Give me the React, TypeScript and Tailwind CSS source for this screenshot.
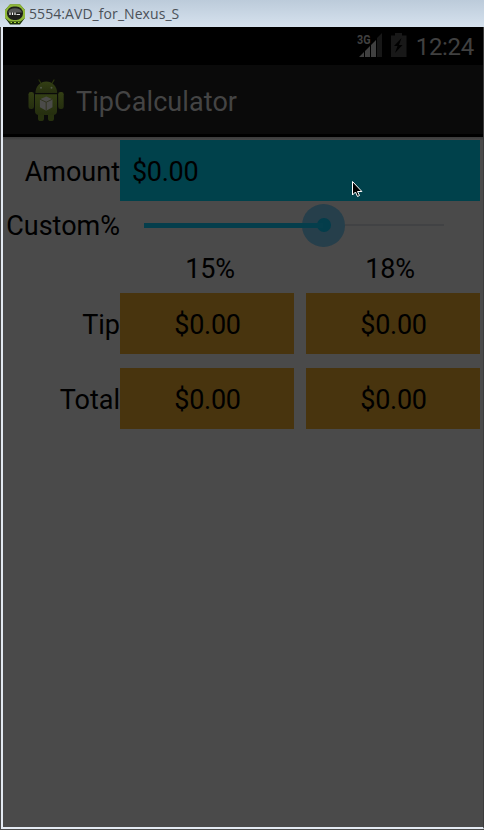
function EmulatorIcon() {
  return (
    <svg width="22" height="22" viewBox="0 0 22 22" className="shrink-0">
      <path d="M1.500 6.500L6 1.500h10l4.500 5v9L16 21.500H6l-4.500-6z" fill="#1c3308" />
      <path d="M1 7L6 1.300h10L21 7v8l-4.500 3.500h-11L1 15z" fill="#8fb83a" />
      <rect x="3" y="3.500" width="16" height="13.500" rx="6.700" fill="#1d1f1a" />
      <path d="M4 9.500a7.200 5.500 0 0 1 14 0z" fill="#565856" />
      <path d="M6 9.500v2.500M8.500 9.500v2.500M11 9.500v2.500" stroke="#fff" strokeWidth="1.200" />
      <path d="M12.500 11.500h3.500" stroke="#ddd" strokeWidth="1" />
      <path d="M6.500 19.500H8M10 19.500h2M14 19.500h1.500" stroke="#a6d63a" strokeWidth="1" />
    </svg>
  );
}

function Robot() {
  return (
    <svg width="36" height="43" viewBox="0 0 36 43" className="shrink-0">
      <defs>
        <linearGradient id="g" x1="0" y1="0" x2="0" y2="1">
          <stop offset="0" stopColor="#333f14" />
          <stop offset="1" stopColor="#252e0f" />
        </linearGradient>
      </defs>
      <path d="M11 1l3 5M26 1l-3 5" stroke="#2b360e" strokeWidth="1.200" strokeLinecap="round" />
      <path d="M7.500 14a10.800 11.500 0 0 1 21.600 0z" fill="url(#g)" />
      <circle cx="13" cy="8.700" r="1" fill="#505748" />
      <circle cx="23.500" cy="8.700" r="1" fill="#505748" />
      <rect x="0.500" y="13" width="5.500" height="17" rx="2.300" fill="url(#g)" />
      <rect x="30.200" y="13" width="5.500" height="17" rx="2.300" fill="url(#g)" />
      <rect x="10" y="32" width="6" height="10" rx="2.600" fill="#27310f" />
      <rect x="20" y="32" width="6" height="10" rx="2.600" fill="#27310f" />
      <path d="M7 15.300h22V32a4 4 0 0 1-4 4H11a4 4 0 0 1-4-4z" fill="url(#g)" />
      <path d="M18.200 17.500l6.300 2.700v8l-6.300 3.500-6.300-3.500v-8z" fill="#4b4b49" />
      <path d="M11.900 20.200l6.300 3 6.300-3M18.200 23.200v8.500" stroke="#30331f" strokeWidth="1" fill="none" />
    </svg>
  );
}

function Signal() {
  return (
    <svg width="26" height="26" viewBox="0 0 26 26" className="shrink-0">
      <text x="0" y="11" fontFamily="Roboto" fontWeight="700" fontSize="13" textLength="13.500" lengthAdjust="spacingAndGlyphs" fill="#404040">3G</text>
      <path d="M20 5l5-5v24h-5z" fill="#171717" />
      <path d="M2 24l5-5v5zM8 18l5-5v11H8zM14 12l5-5v17h-5z" fill="#404040" />
    </svg>
  );
}

function Battery() {
  return (
    <svg width="16" height="24" viewBox="0 0 16 24" className="shrink-0">
      <path d="M4 0h7v2.500h4.500V24H0V2.500h4z" fill="#181818" />
      <path d="M10.500 5L3 13h3.500L4 20l7.500-8H8z" fill="#000" />
    </svg>
  );
}

const label = "w-[117px] shrink-0 text-right whitespace-nowrap";

function ResultRow({ name }: { name: string }) {
  return (
    <div className="flex h-[61px] items-center pr-[3px]">
      <div className={label}><span className="relative top-px">{name}</span></div>
      <div className="flex h-full flex-1 gap-3 text-center leading-[65px] tracking-[-0.3px]">
        <div className="flex-1 bg-[#48340e] pl-px">$0.00</div>
        <div className="flex-1 bg-[#48340e] pl-px">$0.00</div>
      </div>
    </div>
  );
}

export default function App() {
  return (
    <div className="relative flex h-[830px] w-[484px] flex-col overflow-hidden bg-[#4a4a4a] font-['Roboto',sans-serif]">
      <header className="flex h-[27px] items-center bg-linear-to-b from-[#bccbda] to-[#d6e2ee] pl-1 text-[#4b5158]">
        <EmulatorIcon />
        <span className="ml-[3px] font-['Open_Sans',sans-serif] text-[14px] tracking-[0.070px]">5554:AVD_for_Nexus_S</span>
      </header>
      <div className="flex flex-1 flex-col border-b-2 border-l-2 border-r border-b-[#e4eaf3] border-l-[#e4eaf3] border-r-[#3c3c3c] ml-px mb-px">
        <div className="flex h-[38px] items-start justify-end bg-black pr-[9px] text-[#404040]">
          <div className="mt-[6px]"><Signal /></div>
          <div className="ml-[8px] mt-[6px]"><Battery /></div>
          <span className="ml-[9px] mt-[3px] text-[24px] leading-[34px] tracking-[-0.300px]">12:24</span>
        </div>
        <div className="flex h-[72px] items-start border-b-[3px] border-b-black bg-[#0a0a0a] pl-[25px]">
          <div className="mt-[14px]"><Robot /></div>
          <span className="ml-3 mt-[20px] text-[27px] leading-[34px] tracking-[0.080px] text-[#444]">TipCalculator</span>
        </div>
        <main className="flex-1 bg-[#4a4a4a] text-[27px] leading-8 text-black">
          <div className="h-[3px] bg-linear-to-b from-[#3b3b3b] to-[#484848]" />
          <div className="flex h-[61px] items-center pr-[3px]">
            <div className={label}><span className="relative top-px">Amount</span></div>
            <div className="h-full flex-1 bg-[#00414b] pl-3 leading-[65px] tracking-[-0.3px]">$0.00</div>
          </div>
          <div className="flex h-[48px] items-center">
            <div className={label}><span className="relative top-px">Custom%</span></div>
            <div className="ml-6 flex h-[43px] w-[300px] items-center">
              <div className="h-[5px] w-[158px] bg-[#053e4c]" />
              <div className="flex size-[43px] items-center justify-center rounded-full bg-[#263f4b]">
                <div className="relative flex size-full items-center justify-center">
                  <div className="size-[14px] rounded-full bg-[#033d4b]" />
                  <div className="absolute left-0 top-[19px] h-[5px] w-[21px] bg-[#053e4c]" />
                </div>
              </div>
              <div className="h-[2px] flex-1 bg-[#414244]" />
            </div>
          </div>
          <div className="flex h-[44px] pl-[117px] pr-[3px] pt-[4px] text-center leading-8 tracking-[-0.2px]">
            <div className="flex-1">15%</div>
            <div className="flex-1">18%</div>
          </div>
          <div className="flex flex-col gap-[14px]">
            <ResultRow name="Tip" />
            <ResultRow name="Total" />
          </div>
        </main>
      </div>
      <svg className="absolute left-[352px] top-[181px]" width="12" height="17" viewBox="0 0 12 17">
        <path d="M.5.5v13.500l3-3 2 4.500 2-1-2-4h4.400z" fill="#000" stroke="#fff" strokeWidth="1" />
      </svg>
    </div>
  );
}
